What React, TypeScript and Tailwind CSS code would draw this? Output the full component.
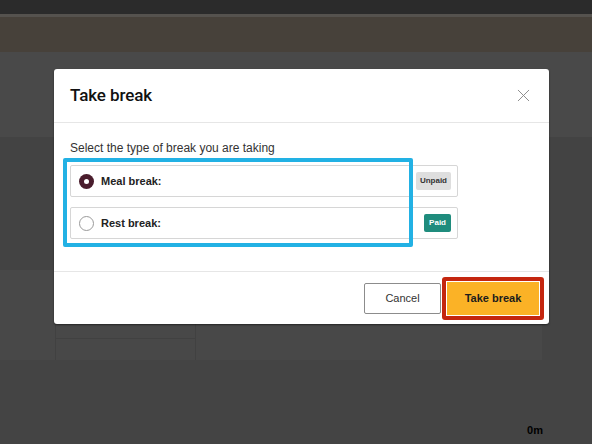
import { X } from "lucide-react";

const FONT = { fontFamily: '"Liberation Sans", Arial, sans-serif' };
const TITLE_FONT = { fontFamily: 'Roboto, "Liberation Sans", Arial, sans-serif' };

type BreakOption = {
  id: string;
  label: string;
  paid: boolean;
  selected: boolean;
};

const OPTIONS: BreakOption[] = [
  { id: "meal", label: "Meal break:", paid: false, selected: true },
  { id: "rest", label: "Rest break:", paid: true, selected: false },
];

function Radio({ checked }: { checked: boolean }) {
  if (checked) {
    return (
      <span className="w-[15px] h-[15px] rounded-full bg-[#4a1d2d] flex items-center justify-center shrink-0">
        <span className="w-[5px] h-[5px] rounded-full bg-white" />
      </span>
    );
  }
  return <span className="w-[15px] h-[15px] rounded-full border border-[#9a9a9a] bg-white shrink-0" />;
}

function OptionCard({ option }: { option: BreakOption }) {
  return (
    <div className="h-[32px] w-[388px] border border-[#d6d6d6] rounded-[2px] flex items-center pl-[8px] pr-[6px]">
      <Radio checked={option.selected} />
      <span className="ml-[7px] text-[11px] font-bold text-[#222]">{option.label}</span>
      <span className="flex-1" />
      {option.paid ? (
        <span className="h-[18px] px-[5px] flex items-center rounded-[2px] bg-[#1f8c7d] text-white text-[8px] font-bold">
          Paid
        </span>
      ) : (
        <span className="h-[18px] px-[4px] flex items-center rounded-[2px] bg-[#dedede] text-[#333] text-[8px] font-bold">
          Unpaid
        </span>
      )}
    </div>
  );
}

export default function App() {
  return (
    <div className="relative w-[592px] h-[444px] overflow-hidden bg-[#444444] flex flex-col" style={FONT}>
      {/* app chrome behind the dialog */}
      <div className="h-[14px] bg-[#2b2b2b]" />
      <div className="h-[3px] bg-[#55524e]" />
      <div className="h-[35px] bg-[#47413a]" />
      <div className="h-[85px] bg-[#494949]" />
      <div className="h-[133px] bg-[#434343]" />
      <div className="h-[90px] w-[542px] bg-[#484848] flex">
        <div className="w-[55px]" />
        <div className="w-[140px] border-l border-[#414141] flex flex-col">
          <div className="h-[69px] border-b border-[#414141]" />
        </div>
        <div className="flex-1 border-l border-[#414141]" />
      </div>
      <div className="flex-1 flex items-end justify-end pr-[49px] pb-[6px]">
        <span className="text-[11px] font-bold text-black">0m</span>
      </div>

      {/* dialog */}
      <div className="absolute left-[54px] top-[69px] w-[495px] bg-white rounded-[3px] shadow-[0_1px_2px_rgba(0,0,0,0.5)] flex flex-col">
        <div className="h-[54px] border-b border-[#e6e6e6] flex items-center justify-between pl-[16px] pr-[15px]">
          <h2 className="text-[17px] font-medium text-[#111] tracking-[-0.1px]" style={TITLE_FONT}>
            Take break
          </h2>
          <X size={21} strokeWidth={1.1} color="#8a8a8a" />
        </div>

        <div className="relative pt-[18px] pb-[32px] pl-[16px] flex flex-col">
          <p className="text-[12px] text-[#333] leading-[14px]">Select the type of break you are taking</p>
          <div className="mt-[10px] flex flex-col gap-[10px]">
            {OPTIONS.map((o) => (
              <OptionCard key={o.id} option={o} />
            ))}
          </div>
          {/* highlight around the options */}
          <div className="absolute left-[9px] top-[35px] w-[350px] h-[89px] border-[4px] border-[#22b1e4] rounded-[2px]" />
        </div>

        <div className="h-[53px] border-t border-[#e6e6e6] flex items-center justify-end pr-[5px] gap-[1px]">
          <button className="h-[31px] w-[77px] border border-[#8c8c8c] rounded-[2px] bg-white text-[11px] text-[#333] font-medium">
            Cancel
          </button>
          <div className="border-[4px] border-[#c4260f] rounded-[3px] p-[1px] bg-white">
            <button className="h-[33px] w-[92px] bg-[#fbb226] text-[11px] font-bold text-[#1c1c1c]">
              Take break
            </button>
          </div>
        </div>
      </div>
    </div>
  );
}
